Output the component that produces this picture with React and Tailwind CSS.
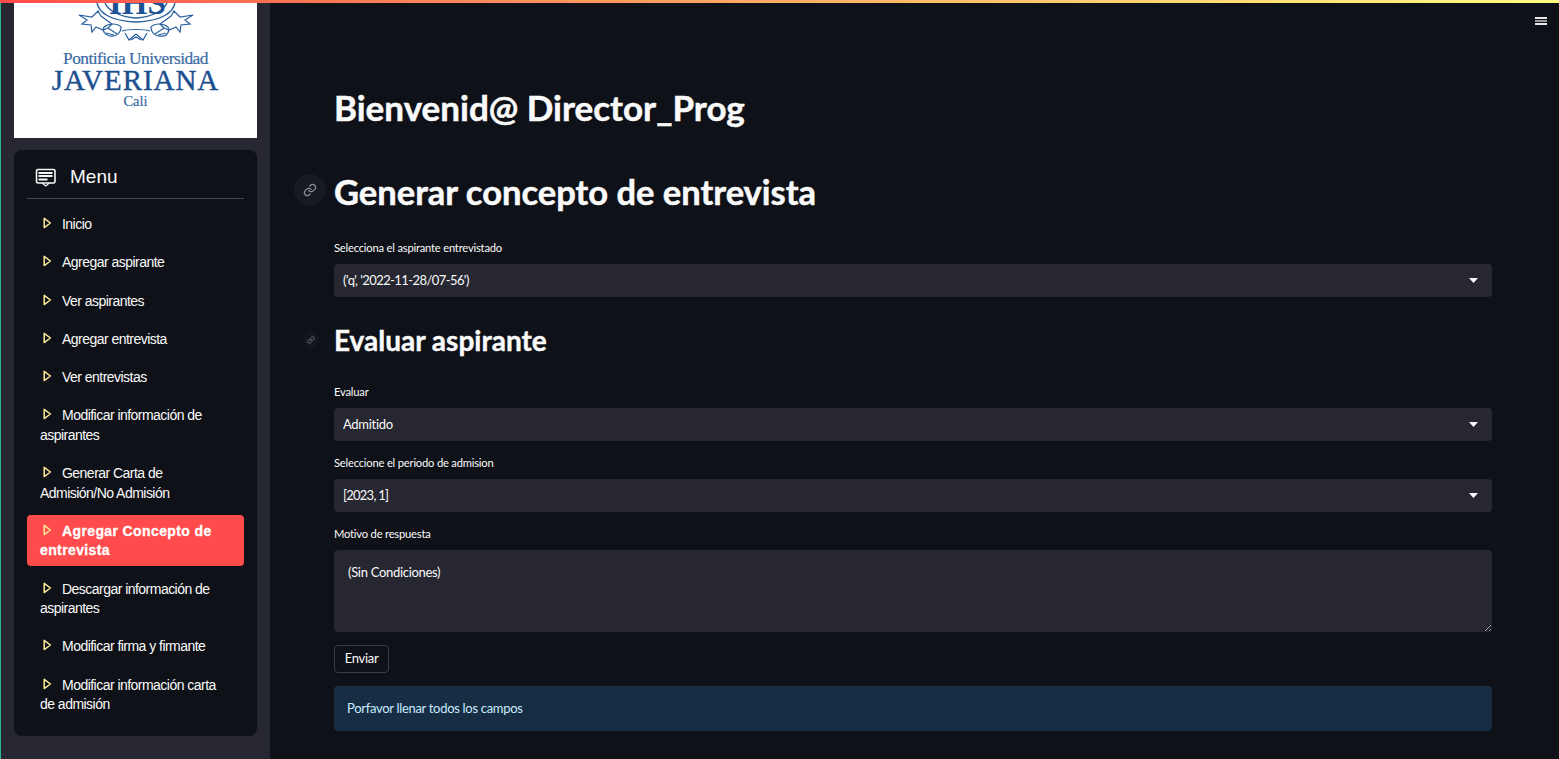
import { useState } from 'react';

const menuItems = [
  'Inicio',
  'Agregar aspirante',
  'Ver aspirantes',
  'Agregar entrevista',
  'Ver entrevistas',
  'Modificar información de aspirantes',
  'Generar Carta de Admisión/No Admisión',
  'Agregar Concepto de entrevista',
  'Descargar información de aspirantes',
  'Modificar firma y firmante',
  'Modificar información carta de admisión',
];

function PlayIcon() {
  return (
    <svg width="16" height="16" viewBox="0 0 16 16" className="inline-block align-[-2px] mr-[7px] ml-[-1px]" fill="none">
      <path d="M5.2 3.4v9.2L11.4 8z" stroke="#fdeb9a" strokeWidth="1.5" strokeLinejoin="round" />
    </svg>
  );
}

function Logo() {
  return (
    <div className="h-[135px] bg-white flex flex-col items-center overflow-hidden text-[#1c4f8f] font-['Liberation_Serif',serif]">
      <svg width="116" height="39" viewBox="0 0 116 39" className="shrink-0 ml-[1px]" fill="none" stroke="#2a609f" strokeWidth="1.2">
        <path d="M19 0c2 9 12 18 39 19c27-1 37-10 39-19" strokeWidth="1.4" />
        <path d="M27 0c3 7 14 14 31 15c17-1 28-8 31-15" strokeWidth="1.4" />
        <path d="M1 12l13 2 6-6 3 5 11 8-4 4-5 2-7-3-4 5-1-7-9-1 5-4z" />
        <path d="M115 12l-13 2-6-6-3 5-11 8 4 4 5 2 7-3 4 5 1-7 9-1-5-4z" />
        <path d="M26 24c5-4 13-4 17 0c0 6-5 10-11 9c-5-1-8-5-6-9z" />
        <path d="M90 24c-5-4-13-4-17 0c0 6 5 10 11 9c5 1 8-5 6-9z" />
        <path d="M30 25l9 6M86 25l-9 6M28 30l8 2M88 30l-8 2" />
        <path d="M44 28c6-2 22-2 28 0M47 30l4 7 7-6 7 6 4-7M53 37l5-3 5 3" />
      </svg>
      <span className="absolute top-0 left-[108px] w-[56px] h-[17px] overflow-hidden text-center text-[#1d5294] text-[33px] leading-[17px] font-bold">
        <span className="relative top-[-5px]">IHS</span>
      </span>
      <div className="mt-[7.5px] text-[17.4px] leading-[17px] tracking-[-0.55px] text-[#3b6ba5] whitespace-nowrap [-webkit-text-stroke:0.2px_#3b6ba5]">Pontificia Universidad</div>
      <div className="mt-[1px] text-[29px] leading-[25px] text-[#1c4f8f] tracking-[0.95px] whitespace-nowrap [-webkit-text-stroke:0.4px_#1c4f8f]">JAVERIANA</div>
      <div className="mt-[0.5px] text-[14.5px] leading-[16px] text-[#3b6ba5] [-webkit-text-stroke:0.2px_#3b6ba5]">Cali</div>
    </div>
  );
}

function MenuIcon() {
  return (
    <svg width="22" height="20" viewBox="0 0 22 20" fill="none" stroke="#f4f6f8" className="shrink-0 mt-[1px]">
      <rect x="1.5" y="1.5" width="18.5" height="13.5" rx="1.5" strokeWidth="1.6" />
      <path d="M3.5 5h14M3.5 8h14M3.5 11.5h9" strokeWidth="1.8" />
      <path d="M7 15l3.7 3 3.7-3" strokeWidth="1.2" />
    </svg>
  );
}

function Sidebar() {
  return (
    <aside className="relative w-[270px] shrink-0 h-full bg-[#262730] pt-[3px] border-l border-l-[#2bb58c] pl-[13px] pr-[13px]">
      <Logo />
      <nav className="mt-[12px] h-[586px] w-[243px] rounded-[8px] bg-[#0e1117] px-[13px] font-['Liberation_Sans',sans-serif]">
        <div className="flex items-center h-[49px] border-b border-[#47484e] pl-[8px] pt-[6px] text-[#fafafa]">
          <MenuIcon />
          <span className="ml-[13px] text-[19px]">Menu</span>
        </div>
        <ul className="mt-[9px] flex flex-col gap-[6.75px]">
          {menuItems.map((item) => {
            const active = item === 'Agregar Concepto de entrevista';
            return (
              <li
                key={item}
                className={`rounded-[4px] pt-[7px] pb-[5px] pl-[13px] pr-[16px] text-[14px] leading-[19.5px] ${
                  active
                    ? 'bg-[#ff4b4b] font-bold tracking-[0.38px] text-white [-webkit-text-stroke:0.3px_#ffffff]'
                    : 'tracking-[-0.53px] text-[#fafafa]'
                }`}
              >
                <PlayIcon />
                {item}
              </li>
            );
          })}
        </ul>
      </nav>
    </aside>
  );
}

function LinkIcon({ size }) {
  return (
    <svg width={size} height={size} viewBox="0 0 24 24" fill="none" stroke="#8c8e93" strokeWidth="2.2" strokeLinecap="round" strokeLinejoin="round">
      <path d="M10 13a5 5 0 0 0 7.5.5l3-3a5 5 0 0 0-7-7l-1.7 1.7" />
      <path d="M14 11a5 5 0 0 0-7.5-.5l-3 3a5 5 0 0 0 7 7l1.7-1.7" />
    </svg>
  );
}

function Select({ value, className }) {
  return (
    <div className="flex h-[33px] items-center justify-between rounded-[4px] bg-[#262730] pl-[9px] pr-[14px] text-[13px] text-[#fafafa]">
      <span className={className}>{value}</span>
      <svg width="9" height="5" viewBox="0 0 9 5" fill="#fafafa"><path d="M0 0h9L4.5 5z" /></svg>
    </div>
  );
}

function Field({ label, children, className }) {
  return (
    <div className={className}>
      <label className="block h-[17px] text-[11.2px] leading-[17px] tracking-[-0.2px] text-[#fafafa] mb-[8px]">{label}</label>
      {children}
    </div>
  );
}

export default function App() {
  const [reason] = useState('(Sin Condiciones)');

  return (
    <div className="relative flex h-[759px] w-full overflow-hidden bg-[#0e1117] font-['Lato',sans-serif]">
      <div className="absolute inset-x-0 top-0 z-10 h-[3px] bg-gradient-to-r from-[#ff4b4b] to-[#fffd80]" />
      <Sidebar />
      <main className="relative flex-1 pl-[64px] pr-[67px]">
        <button className="absolute right-[12px] top-[17px] flex h-[8px] w-[12px] flex-col justify-between">
          <span className="h-[2px] w-full bg-[#e8e8e8]" />
          <span className="h-[2px] w-full bg-[#9a9a9a]" />
          <span className="h-[2px] w-full bg-[#e8e8e8]" />
        </button>

        <h1 className="mt-[84px] h-[46px] text-[35px] leading-[46px] font-bold text-[#fafafa] [-webkit-text-stroke:0.5px_#fafafa]">Bienvenid@ Director_Prog</h1>

        <div className="relative mt-[39px]">
          <span className="absolute left-[-40px] top-[5px] flex h-[32px] w-[32px] items-center justify-center rounded-full bg-[#171a22]">
            <LinkIcon size={14} />
          </span>
          <h2 className="h-[46px] text-[34.5px] leading-[46px] font-bold text-[#fafafa] [-webkit-text-stroke:0.5px_#fafafa]">Generar concepto de entrevista</h2>
        </div>

        <Field label="Selecciona el aspirante entrevistado" className="mt-[24px]">
          <Select value="('q', '2022-11-28/07-56')" className="tracking-[-0.58px]" />
        </Field>

        <div className="relative mt-[23px]">
          <span className="absolute left-[-31px] top-[12px] flex h-[16px] w-[16px] items-center justify-center rounded-full bg-[#14171f]">
            <LinkIcon size={8} />
          </span>
          <h3 className="h-[40px] text-[28px] leading-[40px] font-bold text-[#fafafa] [-webkit-text-stroke:0.4px_#fafafa]">Evaluar aspirante</h3>
        </div>

        <Field label="Evaluar" className="mt-[23px]">
          <Select value="Admitido" className="tracking-[-0.3px]" />
        </Field>
        <Field label="Seleccione el periodo de admision" className="mt-[13px]">
          <Select value="[2023, 1]" className="tracking-[-0.75px]" />
        </Field>
        <Field label="Motivo de respuesta" className="mt-[13px]">
          <textarea
            readOnly
            value={reason}
            className="block h-[82px] w-full rounded-[4px] bg-[#262730] px-[14px] py-[13px] text-[13px] leading-[18px] tracking-[-0.3px] text-[#fafafa] outline-none"
          />
        </Field>

        <button className="mt-[13px] block h-[28px] w-[55px] rounded-[4px] border border-[#3c3e46] text-[13px] tracking-[-0.3px] text-[#fafafa]">Enviar</button>

        <div className="mt-[13px] flex h-[45px] items-center rounded-[4px] bg-[#172d43] px-[13px] text-[13px] tracking-[-0.3px] text-[#c7ebff]">
          Porfavor llenar todos los campos
        </div>
      </main>
    </div>
  );
}
